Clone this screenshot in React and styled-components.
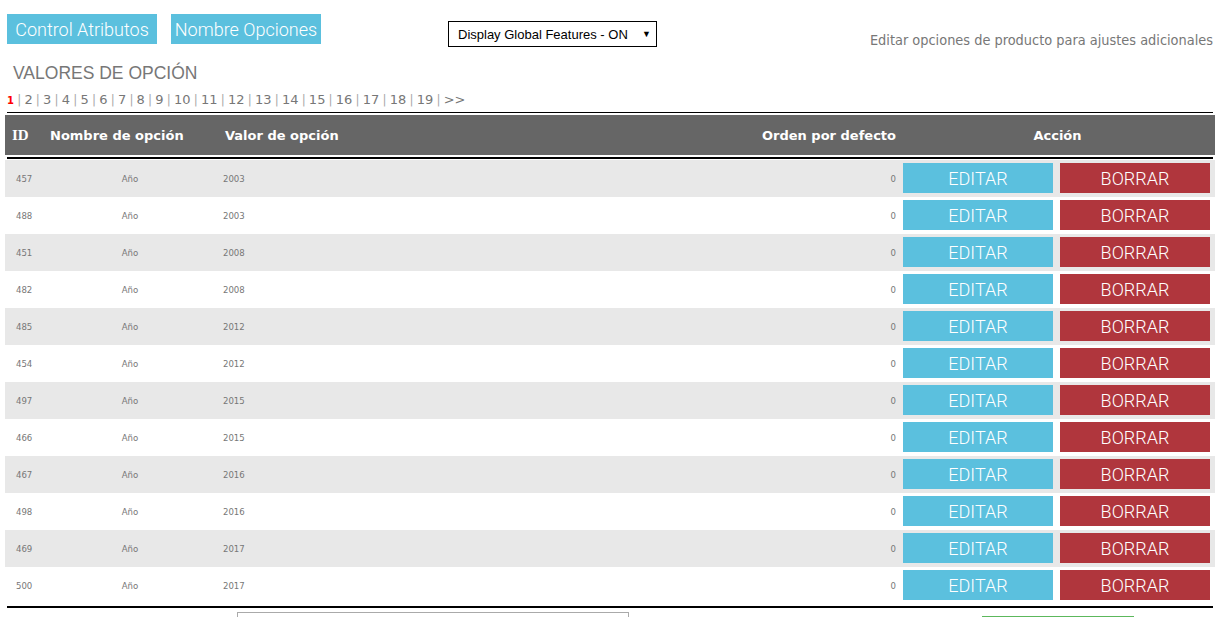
import React from 'react';
import styled, { createGlobalStyle } from 'styled-components';

const GlobalStyle = createGlobalStyle`
  body {
    margin: 0;
    background: #fff;
    font-family: "DejaVu Sans", Verdana, sans-serif;
  }
`;

const Page = styled.div`
  padding: 0 9px 0 5px;
`;

const Toolbar = styled.div`
  display: flex;
  align-items: flex-start;
  margin-top: 14px;
  height: 33px;
  padding: 0 2px;
`;

const TopButton = styled.button`
  width: 150px;
  height: 30px;
  margin-right: 14px;
  border: none;
  padding: 0;
  background: #5bc0de;
  color: #fff;
  font-family: Roboto, "Open Sans", sans-serif;
  font-weight: 300;
  font-size: 18px;
  cursor: pointer;
`;

const SelectBox = styled.div`
  margin-left: 113px;
  margin-top: 7px;
  width: 209px;
  height: 26px;
  box-sizing: border-box;
  border: 1px solid #000;
  display: flex;
  align-items: center;
  justify-content: space-between;
  padding: 0 5px 0 9px;
  font-family: "Liberation Sans", Arial, sans-serif;
  font-size: 13px;
  color: #000;
`;

const Arrow = styled.span`
  font-size: 9px;
`;

const Hint = styled.div`
  margin-left: auto;
  margin-top: 18px;
  font-family: "DejaVu Sans Condensed", "DejaVu Sans", sans-serif;
  font-size: 14.4px;
  color: #777;
`;

const Title = styled.h2`
  margin: 16px 0 0 8px;
  font-family: "Liberation Sans", Arial, sans-serif;
  font-weight: normal;
  font-size: 17.5px;
  line-height: 20px;
  color: #777;
`;

const Pager = styled.div`
  margin: 9px 0 0 2px;
  font-family: "DejaVu Sans", Verdana, sans-serif;
  font-size: 13px;
  line-height: 16px;
  color: #777;
  display: flex;
  align-items: baseline;
`;

const PageLink = styled.span`
  color: ${(p) => (p.$active ? '#f00' : '#777')};
  font-weight: ${(p) => (p.$active ? 'bold' : 'normal')};
  font-size: ${(p) => (p.$active ? '10px' : '13px')};
`;

const Sep = styled.span`
  margin: 0 3.2px;
  font-size: 12px;
  color: #aaa;
`;

const Rule = styled.div`
  margin: ${(p) => p.$m || '0 2px'};
  border-top: ${(p) => p.$w || 1}px solid #000;
`;

const cols = '40px 170px 1fr 190px 315px';

const HeadRow = styled.div`
  display: grid;
  grid-template-columns: ${cols};
  align-items: center;
  height: 40px;
  margin: 2px 0;
  background: #666;
  color: #fff;
  font-family: "DejaVu Sans", Verdana, sans-serif;
  font-weight: bold;
  font-size: 13px;
`;

const HeadCell = styled.div`
  padding: ${(p) => p.$pad || '0'};
  text-align: ${(p) => p.$align || 'left'};
  font-family: ${(p) => (p.$serif ? '"Liberation Serif", "Times New Roman", serif' : 'inherit')};
  font-size: ${(p) => (p.$serif ? '15px' : 'inherit')};
`;

const Row = styled.div`
  display: grid;
  grid-template-columns: ${cols};
  align-items: center;
  height: 37px;
  background: ${(p) => (p.$odd ? '#e8e8e8' : '#fff')};
  font-family: "DejaVu Sans Condensed", "DejaVu Sans", sans-serif;
  font-size: 9.5px;
  color: #777;
`;

const Cell = styled.div`
  padding: ${(p) => p.$pad || '0'};
  text-align: ${(p) => p.$align || 'left'};
`;

const Actions = styled.div`
  display: flex;
  gap: 7px;
  padding-left: 3px;
  align-self: start;
  margin-top: 3px;
`;

const ActionButton = styled.button`
  width: 150px;
  height: 30px;
  border: none;
  padding: 0;
  background: ${(p) => (p.$danger ? '#b0363d' : '#5bc0de')};
  color: #fff;
  font-family: Roboto, "Open Sans", sans-serif;
  font-weight: 300;
  font-size: 18px;
  cursor: pointer;
`;

const Footer = styled.div`
  display: flex;
  align-items: flex-start;
  margin-top: 4px;
`;

const SearchInput = styled.div`
  margin-left: 232px;
  width: 390px;
  height: 30px;
  border: 1px solid #aaa;
`;

const GreenButton = styled.div`
  margin-left: 353px;
  margin-top: 4px;
  width: 152px;
  height: 30px;
  border-top: 2px solid #5cb85c;
`;

const rows = [
  [457, 2003], [488, 2003], [451, 2008], [482, 2008], [485, 2012], [454, 2012],
  [497, 2015], [466, 2015], [467, 2016], [498, 2016], [469, 2017], [500, 2017],
];

const pages = Array.from({ length: 19 }, (_, i) => i + 1);

export default function App() {
  return (
    <Page>
      <GlobalStyle />
      <Toolbar>
        <TopButton>Control Atributos</TopButton>
        <TopButton>Nombre Opciones</TopButton>
        <SelectBox>
          <span>Display Global Features - ON</span>
          <Arrow>▼</Arrow>
        </SelectBox>
        <Hint>Editar opciones de producto para ajustes adicionales</Hint>
      </Toolbar>
      <Title>VALORES DE OPCIÓN</Title>
      <Pager>
        {pages.map((n) => (
          <React.Fragment key={n}>
            <PageLink $active={n === 1}>{n}</PageLink>
            <Sep>|</Sep>
          </React.Fragment>
        ))}
        <PageLink>&gt;&gt;</PageLink>
      </Pager>
      <Rule $m="3px 2px 0" />
      <HeadRow>
        <HeadCell $serif $pad="0 0 0 7px">ID</HeadCell>
        <HeadCell $pad="0 0 0 5px">Nombre de opción</HeadCell>
        <HeadCell $pad="0 0 0 10px">Valor de opción</HeadCell>
        <HeadCell $align="right" $pad="0 4px 0 0">Orden por defecto</HeadCell>
        <HeadCell $align="center">Acción</HeadCell>
      </HeadRow>
      <Rule $w={2} $m="0 2px 1px" />
      {rows.map(([id, val], i) => (
        <Row key={id} $odd={i % 2 === 0}>
          <Cell $pad="0 0 0 11px">{id}</Cell>
          <Cell $align="center">Año</Cell>
          <Cell $pad="0 0 0 8px">{val}</Cell>
          <Cell $align="right" $pad="0 4px 0 0">0</Cell>
          <Actions>
            <ActionButton>EDITAR</ActionButton>
            <ActionButton $danger>BORRAR</ActionButton>
          </Actions>
        </Row>
      ))}
      <Rule $w={2} $m="2px 2px 0" />
      <Footer>
        <SearchInput />
        <GreenButton />
      </Footer>
    </Page>
  );
}
